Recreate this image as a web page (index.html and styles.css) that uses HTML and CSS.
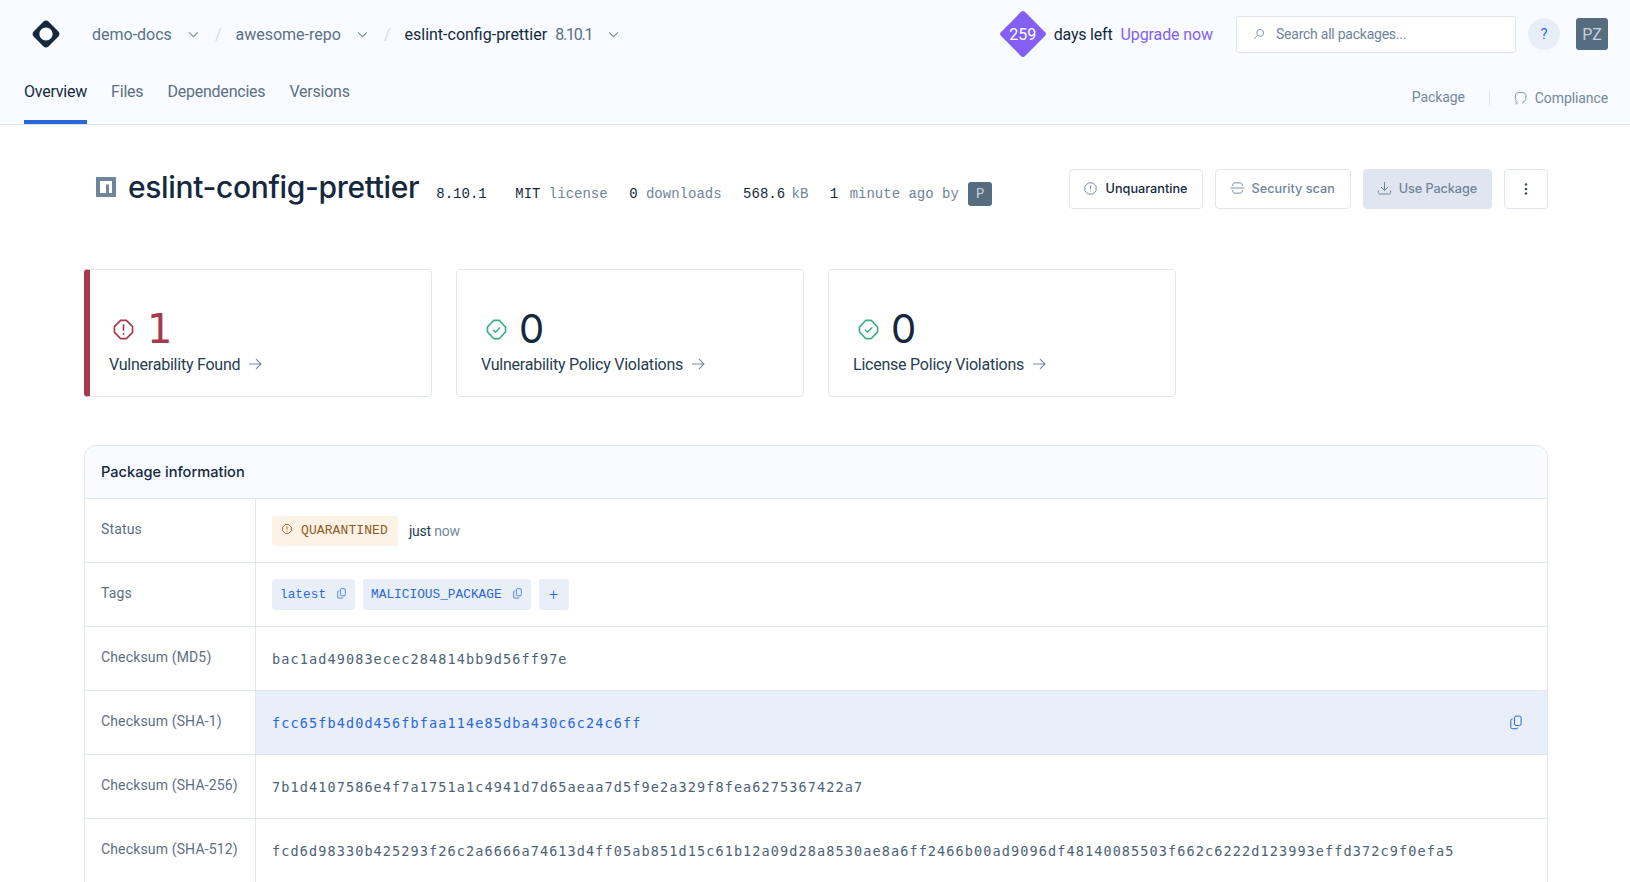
FILE: index.html
```html
<!doctype html>
<html lang="en">
<head>
    <meta charset="UTF-8" />
    <title>eslint-config-prettier</title>
    <link rel="stylesheet" href="styles.css">
</head>
<body>

<svg class="sprites" width="0" height="0">
    <symbol id="copy" viewBox="0 0 12 14"><rect x="4.5" y="0.6" width="6.6" height="9.4" rx="1.6" fill="none" stroke="currentColor"/><path d="M2.8 3.4H2.2C1.4 3.4 0.8 4 0.8 4.8V11.8C0.8 12.6 1.4 13.2 2.2 13.2H6.6C7.4 13.2 8 12.6 8 12" fill="none" stroke="currentColor"/></symbol>
    <symbol id="chev" viewBox="0 0 10 6"><path d="M1 1L5 5L9 1" fill="none" stroke="currentColor"/></symbol>
    <symbol id="arrow" viewBox="0 0 14 12"><path d="M1 6H13M8 1L13 6L8 11" fill="none" stroke="currentColor" stroke-width="1.1"/></symbol>
    <symbol id="ok" viewBox="0 0 22 22"><path d="M8 1.5H14L20.5 8.5V13.5L14 20.5H8L1.5 13.5V8.5Z" fill="none" stroke="currentColor" stroke-width="1.7" stroke-linejoin="round"/><path d="M7.3 11.2L10 13.8L14.8 8.8" fill="none" stroke="currentColor" stroke-width="1.5"/></symbol>
</svg>

<header class="topbar">
    <div class="topbar-row">
        <svg class="logo" viewBox="0 0 28 28"><path fill-rule="evenodd" fill="#14293d" d="M14 0.5C15 0.5 15.8 0.9 16.5 1.6L26.4 11.5C27.8 12.9 27.8 15.1 26.4 16.5L16.5 26.4C15.1 27.8 12.9 27.8 11.5 26.4L1.6 16.5C0.2 15.1 0.2 12.9 1.6 11.5L11.5 1.6C12.2 0.9 13 0.5 14 0.5ZM14 7.6C10.2 7.6 7.4 10.6 7.4 14C7.4 17.4 10.2 20.4 14 20.4C17.8 20.4 20.6 17.4 20.6 14C20.6 10.6 17.8 7.6 14 7.6Z"/></svg>
        <nav class="crumbs">
            <span class="crumb">demo-docs</span>
            <svg class="chev"><use href="#chev"/></svg>
            <span class="slash">/</span>
            <span class="crumb">awesome-repo</span>
            <svg class="chev"><use href="#chev"/></svg>
            <span class="slash">/</span>
            <span class="crumb crumb-current">eslint-config-prettier</span>
            <span class="crumb crumb-version">8.10.1</span>
            <svg class="chev"><use href="#chev"/></svg>
        </nav>
        <div class="trial">
            <span class="trial-badge"><span>259</span></span>
            <span class="trial-text">days left</span>
            <a class="trial-link" href="#">Upgrade now</a>
        </div>
        <div class="search">
            <svg class="search-icon" viewBox="0 0 14 14"><circle cx="8.4" cy="5.6" r="4" fill="none" stroke="currentColor"/><path d="M5.4 8.6L1.4 12.6" stroke="currentColor" fill="none"/></svg>
            <span>Search all packages...</span>
        </div>
        <span class="help">?</span>
        <span class="avatar">PZ</span>
    </div>
    <div class="tabs-row">
        <nav class="tabs">
            <a class="tab tab-active" href="#">Overview</a>
            <a class="tab" href="#">Files</a>
            <a class="tab" href="#">Dependencies</a>
            <a class="tab" href="#">Versions</a>
        </nav>
        <div class="views">
            <span class="view view-package">Package</span>
            <span class="view-sep"></span>
            <svg class="view-icon" viewBox="0 0 14 14"><path d="M3.5 10.5C2.3 10 1.5 8.8 1.5 7.4V4.5C1.5 2.6 3 1.2 4.8 1.2H9.5C11.4 1.2 12.8 2.6 12.8 4.5V7.4C12.8 9.2 11.6 10.6 10 10.9L9.4 12.8" fill="none" stroke="currentColor"/><path d="M1.5 11.2L4 13.6M4 11.2L1.5 13.6" stroke="currentColor" fill="none" stroke-width="0.8"/></svg>
            <span class="view">Compliance</span>
        </div>
    </div>
</header>

<main class="content">
    <section class="title-row">
        <div class="title-main">
            <svg class="npm-icon" viewBox="0 0 20 20"><path fill="#6f8599" fill-rule="evenodd" d="M0 0H20V20H0ZM4 4V16H10V7.5H13V16H16V4Z"/></svg>
            <h1 class="title">eslint-config-prettier</h1>
            <div class="meta">
                <span class="meta-item meta-version">8.10.1</span>
                <span class="meta-item">MIT <i>license</i></span>
                <span class="meta-item">0 <i>downloads</i></span>
                <span class="meta-item">568.6 <i class="meta-unit">kB</i></span>
                <span class="meta-item">1 <i class="meta-ago">minute ago by</i> <b class="publisher">P</b></span>
            </div>
        </div>
        <div class="actions">
            <button class="btn btn-dark"><svg class="btn-icon" viewBox="0 0 14 14"><path d="M4.5 1H9.5L13 4.5V9.5L9.5 13H4.5L1 9.5V4.5Z" fill="none" stroke="currentColor"/><path d="M7 3.8V7.8M7 9.2V10.2" stroke="currentColor"/></svg>Unquarantine</button>
            <button class="btn btn-scan"><svg class="btn-icon btn-icon-wide" viewBox="0 0 16 14"><path d="M0.5 7H15.5M3 5V3.6C3 2.4 4 1.5 5 1.5H11C12 1.5 13 2.4 13 3.6V5M3 9V10.4C3 11.6 4 12.5 5 12.5H11C12 12.5 13 11.6 13 10.4V9" fill="none" stroke="currentColor"/></svg>Security scan</button>
            <button class="btn btn-fill"><svg class="btn-icon btn-icon-wide" viewBox="0 0 14 14"><path d="M7 1V9.5M3.5 6L7 9.5L10.5 6M0.8 9.5V11.5C0.8 12.4 1.5 13 2.3 13H11.7C12.5 13 13.2 12.4 13.2 11.5V9.5" fill="none" stroke="currentColor"/></svg>Use Package</button>
            <button class="btn btn-more"><svg width="4" height="14" viewBox="0 0 4 14"><circle cx="2" cy="2.5" r="1.3" fill="#3f5468"/><circle cx="2" cy="7" r="1.3" fill="#3f5468"/><circle cx="2" cy="11.5" r="1.3" fill="#3f5468"/></svg></button>
        </div>
    </section>

    <section class="cards">
        <a class="card card-bad" href="#">
            <div class="card-top">
                <svg class="card-icon" viewBox="0 0 22 22"><path d="M8 1.5H14L20.5 8V14L14 20.5H8L1.5 14V8Z" fill="none" stroke="currentColor" stroke-width="1.7" stroke-linejoin="round"/><path d="M11 5.6V12.4M11 14.6V16.4" stroke="currentColor" stroke-width="1.7"/></svg>
                <span class="card-num">1</span>
            </div>
            <div class="card-label">Vulnerability Found <svg class="arrow"><use href="#arrow"/></svg></div>
        </a>
        <a class="card" href="#">
            <div class="card-top">
                <svg class="card-icon card-icon-ok"><use href="#ok"/></svg>
                <span class="card-num">0</span>
            </div>
            <div class="card-label">Vulnerability Policy Violations <svg class="arrow"><use href="#arrow"/></svg></div>
        </a>
        <a class="card" href="#">
            <div class="card-top">
                <svg class="card-icon card-icon-ok"><use href="#ok"/></svg>
                <span class="card-num">0</span>
            </div>
            <div class="card-label">License Policy Violations <svg class="arrow"><use href="#arrow"/></svg></div>
        </a>
    </section>

    <section class="info">
        <div class="info-head">Package information</div>
        <div class="row">
            <div class="row-label">Status</div>
            <div class="row-value">
                <span class="status-pill"><svg class="status-icon" viewBox="0 0 10 10"><path d="M3.2 0.6H6.8L9.4 3.2V6.8L6.8 9.4H3.2L0.6 6.8V3.2Z" fill="none" stroke="currentColor" stroke-width="0.9"/><path d="M5 2.4V5.6M5 6.6V7.4" stroke="currentColor" stroke-width="0.9"/></svg>QUARANTINED</span>
                <span class="status-when">just <i>now</i></span>
            </div>
        </div>
        <div class="row">
            <div class="row-label">Tags</div>
            <div class="row-value">
                <span class="tag">latest<svg class="copy-small"><use href="#copy"/></svg></span>
                <span class="tag">MALICIOUS_PACKAGE<svg class="copy-small"><use href="#copy"/></svg></span>
                <span class="tag tag-add">+</span>
            </div>
        </div>
        <div class="row">
            <div class="row-label">Checksum (MD5)</div>
            <div class="row-value mono">bac1ad49083ecec284814bb9d56ff97e</div>
        </div>
        <div class="row row-hover">
            <div class="row-label">Checksum (SHA-1)</div>
            <div class="row-value mono">fcc65fb4d0d456fbfaa114e85dba430c6c24c6ff<svg class="copy-big"><use href="#copy"/></svg></div>
        </div>
        <div class="row">
            <div class="row-label">Checksum (SHA-256)</div>
            <div class="row-value mono">7b1d4107586e4f7a1751a1c4941d7d65aeaa7d5f9e2a329f8fea6275367422a7</div>
        </div>
        <div class="row">
            <div class="row-label">Checksum (SHA-512)</div>
            <div class="row-value mono">fcd6d98330b425293f26c2a6666a74613d4ff05ab851d15c61b12a09d28a8530ae8a6ff2466b00ad9096df48140085503f662c6222d123993effd372c9f0efa5</div>
        </div>
    </section>
</main>

</body>
</html>
```

FILE: styles.css
```css
html, body {
    margin: 0;
    height: 882px;
    overflow: hidden;
    background: #ffffff;
}
body {
    font-family: "Inter", "Liberation Sans", sans-serif;
    color: #14293d;
}
a {
    text-decoration: none;
    color: inherit;
}
.sprites {
    position: absolute;
}

/* header */
.topbar {
    height: 124px;
    background: #f8fbff;
    border-bottom: 1px solid #dfe6ee;
    padding: 0 22px 0 24px;
}
.topbar-row {
    height: 68px;
    display: flex;
    align-items: center;
}
.logo {
    width: 28px;
    height: 28px;
    margin: 0 32px 0 8px;
}
.crumbs {
    display: flex;
    align-items: center;
    flex: 1;
    font-family: "Roboto", sans-serif;
    font-size: 16px;
    color: #5b7084;
}
.crumb-current {
    color: #14293d;
}
.crumb-version {
    margin-left: 8px;
    letter-spacing: -1.2px;
}
.chev {
    width: 11px;
    height: 7px;
    margin-left: 16px;
    color: #7b8ea0;
}
.slash {
    color: #d5dde6;
    margin: 0 14px 0 16px;
}
.trial {
    display: flex;
    align-items: center;
    font-family: "Roboto", sans-serif;
    font-size: 16px;
    margin-right: 23px;
}
.trial-badge {
    width: 48px;
    height: 48px;
    margin-right: 7px;
    display: flex;
    align-items: center;
    justify-content: center;
    position: relative;
    color: #ffffff;
}
.trial-badge::before {
    content: "";
    position: absolute;
    width: 34px;
    height: 34px;
    left: 7px;
    top: 7px;
    background: #8360f3;
    border-radius: 3px;
    transform: rotate(45deg);
}
.trial-badge span {
    position: relative;
}
.trial-text {
    letter-spacing: -0.2px;
}
.trial-link {
    color: #8360f3;
    margin-left: 8px;
    letter-spacing: -0.1px;
}
.search {
    width: 278px;
    height: 35px;
    display: flex;
    align-items: center;
    background: #ffffff;
    border: 1px solid #dfe6ee;
    border-radius: 3px;
    font-family: "Roboto", sans-serif;
    font-size: 14px;
    letter-spacing: -0.24px;
    color: #6f8599;
}
.search-icon {
    width: 12px;
    height: 12px;
    margin: 0 11px 0 16px;
}
.help {
    width: 32px;
    height: 32px;
    margin-left: 12px;
    border-radius: 50%;
    background: #e8eef8;
    color: #2f6bdc;
    font-family: "Roboto", sans-serif;
    font-size: 15px;
    display: flex;
    align-items: center;
    justify-content: center;
}
.avatar {
    width: 32px;
    height: 32px;
    margin-left: 16px;
    border-radius: 3px;
    background: #566d80;
    color: #c6d1da;
    font-family: "Roboto", sans-serif;
    font-size: 16px;
    display: flex;
    align-items: center;
    justify-content: center;
}
.tabs-row {
    height: 56px;
    display: flex;
    justify-content: space-between;
}
.tabs {
    display: flex;
    gap: 24px;
    font-family: "Roboto", sans-serif;
    font-size: 16px;
    letter-spacing: -0.22px;
    color: #5b7084;
}
.tab {
    height: 52px;
    padding-top: 14px;
    box-sizing: border-box;
}
.tab-active {
    color: #14293d;
    height: 56px;
    border-bottom: 4px solid #2b67d8;
}
.views {
    display: flex;
    align-items: center;
    height: 60px;
    font-family: "Roboto", sans-serif;
    font-size: 14px;
    letter-spacing: -0.1px;
    color: #74889a;
}
.view-package {
    margin-bottom: 2px;
}
.view-sep {
    width: 1px;
    height: 14px;
    background: #dfe6ee;
    margin: 0 24px;
}
.view-icon {
    width: 13px;
    height: 14px;
    margin-right: 8px;
}

/* page */
.content {
    padding: 0 82px 0 84px;
}
.title-row {
    display: flex;
    justify-content: space-between;
    align-items: center;
    height: 126px;
    padding-top: 1px;
    margin-bottom: 17px;
}
.title-main {
    display: flex;
    align-items: center;
    padding-left: 12px;
    margin-top: -4px;
}
.npm-icon {
    width: 20px;
    height: 20px;
    margin-right: 12px;
}
.title {
    margin: 0 17px 0 0;
    font-size: 30px;
    font-weight: 500;
    letter-spacing: -0.35px;
}
.meta {
    display: flex;
    align-items: center;
    gap: 21.5px;
    font-family: "Liberation Mono", monospace;
    font-size: 14px;
    margin-top: 13px;
}
.meta i {
    font-style: normal;
    color: #6f8599;
}
.meta-version {
    margin-right: 7px;
}
.meta .meta-unit {
    margin-left: -2px;
}
.meta .meta-ago {
    margin-left: 3px;
}
.publisher {
    display: inline-block;
    width: 24px;
    height: 24px;
    line-height: 24px;
    text-align: center;
    border-radius: 3px;
    background: #566d80;
    color: #c6d1da;
    font-weight: 400;
    margin-left: 1px;
}
.actions {
    display: flex;
    gap: 12px;
}
.btn {
    height: 40px;
    padding: 0 14px 2px;
    display: flex;
    align-items: center;
    background: #ffffff;
    border: 1px solid #dfe6ee;
    border-radius: 4px;
    font-family: "Inter", sans-serif;
    font-size: 12.7px;
    font-weight: 500;
    color: #6f8599;
}
.btn-dark {
    color: #14293d;
}
.btn-scan {
    padding-right: 15px;
}
.btn-fill {
    background: #dfe6ef;
    padding-left: 13px;
    letter-spacing: -0.1px;
}
.btn-more {
    width: 44px;
    justify-content: center;
    padding: 0;
}
.btn-icon {
    width: 13px;
    height: 13px;
    margin-right: 9px;
    color: #6f8599;
}
.btn-icon-wide {
    width: 15px;
    height: 14px;
    margin-right: 7px;
}

/* summary cards */
.cards {
    display: flex;
    gap: 24px;
    margin-bottom: 48px;
}
.card {
    width: 348px;
    height: 128px;
    box-sizing: border-box;
    border: 1px solid #dfe6ee;
    border-radius: 4px;
    padding: 40px 0 0 24px;
}
.card-bad {
    border-left: 6px solid #a73a4c;
    padding-left: 19px;
}
.card-top {
    display: flex;
    align-items: center;
    height: 38px;
}
.card-icon {
    width: 21px;
    height: 21px;
    margin: 0 12px 0 5px;
    color: #a73a4c;
}
.card-bad .card-icon {
    margin: 0 13px 0 4px;
}
.card-icon-ok {
    color: #3cab8a;
}
.card-num {
    font-size: 40px;
    line-height: 38px;
    color: #14293d;
    font-weight: 400;
}
.card-bad .card-num {
    font-family: "DejaVu Sans", sans-serif;
    color: #a73a4c;
}
.card-label {
    margin-top: 7px;
    font-family: "Roboto", sans-serif;
    font-size: 16px;
    letter-spacing: -0.23px;
    color: #253d52;
}
.arrow {
    width: 14px;
    height: 12px;
    margin-left: 4px;
    color: #7b8ea0;
}

/* package information table */
.info {
    border: 1px solid #dfe6ee;
    border-radius: 12px 12px 0 0;
}
.info-head {
    height: 52px;
    display: flex;
    align-items: center;
    padding-left: 16px;
    background: #f8fbff;
    border-radius: 12px 12px 0 0;
    font-size: 14.6px;
    font-weight: 500;
}
.row {
    display: flex;
    height: 64px;
    border-top: 1px solid #dfe6ee;
    box-sizing: border-box;
}
.row-label {
    width: 171px;
    flex: none;
    box-sizing: border-box;
    padding: 22px 0 0 16px;
    border-right: 1px solid #dfe6ee;
    font-family: "Roboto", sans-serif;
    font-size: 14px;
    letter-spacing: 0.15px;
    color: #5b7084;
}
.row-value {
    flex: 1;
    display: flex;
    align-items: center;
    padding: 0 16px;
    font-size: 14px;
}
.mono {
    font-family: "DejaVu Sans Mono", monospace;
    font-size: 13.5px;
    letter-spacing: 1.11px;
    color: #4c6276;
}
.row-hover .row-value {
    background: #e8eff9;
    color: #2b67d8;
    justify-content: space-between;
}
.status-pill {
    height: 30px;
    padding: 0 10px;
    display: flex;
    align-items: center;
    background: #fcf3e6;
    border-radius: 3px;
    font-family: "Liberation Mono", monospace;
    font-size: 13px;
    letter-spacing: 0.1px;
    color: #8f5a1d;
}
.status-icon {
    width: 10px;
    height: 10px;
    margin-right: 9px;
    margin-top: -3px;
}
.status-when {
    font-family: "Roboto", sans-serif;
    margin-left: 11px;
    letter-spacing: -0.2px;
    color: #253d52;
}
.status-when i {
    font-style: normal;
    color: #74889a;
}
.tag {
    height: 31px;
    padding: 0 8px;
    margin-right: 8px;
    display: flex;
    align-items: center;
    background: #e8eff9;
    border-radius: 3px;
    font-family: "Liberation Mono", monospace;
    font-size: 12.8px;
    color: #2b67d8;
}
.tag-add {
    width: 30px;
    padding: 0;
    justify-content: center;
    font-family: "Roboto", sans-serif;
    font-size: 16px;
    font-weight: 300;
}
.copy-small {
    width: 9px;
    height: 11px;
    margin: -2px 1px 0 11px;
}
.copy-big {
    width: 12px;
    height: 15px;
    color: #2b67d8;
    margin-right: 9px;
}
```
